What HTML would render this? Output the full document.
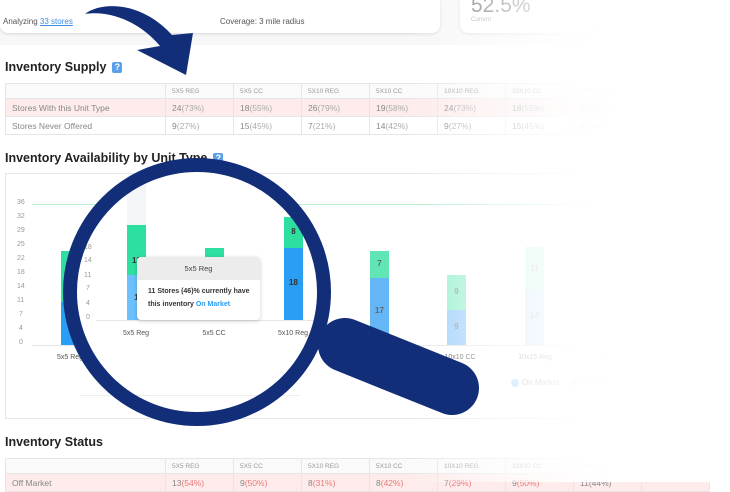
<!DOCTYPE html>
<html><head><meta charset="utf-8"><style>
*{margin:0;padding:0;box-sizing:border-box}
body{width:730px;height:482px;overflow:hidden;background:#fff;font-family:"Liberation Sans",sans-serif;position:relative;color:#333}
.abs{position:absolute}
.band{left:0;top:0;width:730px;height:45px;background:#f7f7f8}
.card{background:#fff;border-radius:0 0 8px 8px;box-shadow:0 1px 3px rgba(0,0,0,.12)}
h3{position:absolute;font-size:12.5px;font-weight:bold;color:#222;white-space:nowrap}
.q{display:inline-block;width:10px;height:11px;background:#5aa0e8;color:#fff;font-size:9px;text-align:center;line-height:11px;border-radius:2px;margin-left:6px;vertical-align:1px}
table{position:absolute;border-collapse:collapse;font-size:8.5px;color:#888}
td{border:1px solid #e6e6e6;padding:0 6px;height:18px;white-space:nowrap}
tr.h td{height:15px;font-size:6.5px;color:#999;background:#fafafa}
tr.p td{background:#fdeceb}
td.f{width:160px}
td.c{width:68px}
.r{color:#e87a7a}
.t{font-size:7px;color:#999;position:absolute}
.lab{font-size:7px;color:#555;position:absolute;transform:translateX(-50%);white-space:nowrap}
.bar{position:absolute;width:19px}
.n{position:absolute;width:19px;text-align:center;font-size:8px;font-weight:bold;color:#333}
.fade{left:0;top:0;width:730px;height:482px;background:linear-gradient(90deg,rgba(255,255,255,0) 0,rgba(255,255,255,0) 410px,rgba(255,255,255,.6) 500px,rgba(255,255,255,.95) 580px,#fff 620px)}
</style></head><body>
<div class="abs band"></div>
<div class="abs card" style="left:0;top:0;width:440px;height:33px"></div>
<div class="abs" style="left:3px;top:17px;font-size:8px;color:#555">Analyzing <span style="color:#3b8de0;text-decoration:underline">33 stores</span></div>
<div class="abs" style="left:220px;top:17px;font-size:8px;color:#555">Coverage: 3 mile radius</div>
<div class="abs card" style="left:460px;top:0;width:135px;height:33px;border-radius:0 0 8px 8px"></div>
<div class="abs" style="left:471px;top:-6px;font-size:21px;color:#666">52.5%</div>
<div class="abs" style="left:471px;top:17px;font-size:6px;color:#999">Current</div>

<h3 style="left:5px;top:60px">Inventory Supply<span class="q">?</span></h3>
<table style="left:5px;top:83px">
<tr class="h"><td class="f"></td><td class="c">5X5 REG</td><td class="c">5X5 CC</td><td class="c">5X10 REG</td><td class="c">5X10 CC</td><td class="c">10X10 REG</td><td class="c">10X10 CC</td><td class="c">10X15 REG</td><td class="c"></td></tr>
<tr class="p"><td>Stores With this Unit Type</td><td>24<span style="color:#aaa">(73%)</span></td><td>18<span style="color:#aaa">(55%)</span></td><td>26<span style="color:#aaa">(79%)</span></td><td>19<span style="color:#aaa">(58%)</span></td><td>24<span style="color:#aaa">(73%)</span></td><td>18<span style="color:#aaa">(55%)</span></td><td>25(76%)</td><td></td></tr>
<tr><td>Stores Never Offered</td><td>9<span style="color:#aaa">(27%)</span></td><td>15<span style="color:#aaa">(45%)</span></td><td>7<span style="color:#aaa">(21%)</span></td><td>14<span style="color:#aaa">(42%)</span></td><td>9<span style="color:#aaa">(27%)</span></td><td>15<span style="color:#aaa">(45%)</span></td><td>8(24%)</td><td></td></tr>
</table>

<h3 style="left:5px;top:151px">Inventory Availability by Unit Type<span class="q">?</span></h3>
<div class="abs" style="left:5px;top:173px;width:700px;height:246px;border:1px solid #e8e8e8"></div>
<div class="abs" style="left:32px;top:204px;width:640px;height:1px;background:#b8efcf"></div>
<div class="abs" style="left:32px;top:345px;width:640px;height:1px;background:#e6e6e6"></div>
<div class="t" style="left:17px;top:199px">36</div><div class="t" style="left:17px;top:213px">32</div><div class="t" style="left:17px;top:227px">29</div><div class="t" style="left:17px;top:241px">25</div><div class="t" style="left:17px;top:255px">22</div><div class="t" style="left:17px;top:269px">18</div><div class="t" style="left:17px;top:283px">14</div><div class="t" style="left:17px;top:297px">11</div><div class="t" style="left:19px;top:311px">7</div><div class="t" style="left:19px;top:325px">4</div><div class="t" style="left:19px;top:339px">0</div>
<div class="bar" style="left:61px;top:251px;height:51px;background:#2ee0a0"></div><div class="bar" style="left:61px;top:302px;height:43px;background:#2a9df4"></div>
<div class="bar" style="left:370px;top:251px;height:27px;background:#5fe6b4"></div><div class="bar" style="left:370px;top:278px;height:67px;background:#64b6f7"></div>
<div class="n" style="left:370px;top:259px;color:#666">7</div><div class="n" style="left:370px;top:306px;color:#666">17</div>
<div class="bar" style="left:447px;top:275px;height:35px;background:#9cf0d0"></div><div class="bar" style="left:447px;top:310px;height:35px;background:#9fd0fa"></div>
<div class="n" style="left:447px;top:287px;color:#999">9</div><div class="n" style="left:447px;top:322px;color:#999">9</div>
<div class="bar" style="left:525px;top:247px;height:43px;background:#c9f6e4"></div><div class="bar" style="left:525px;top:290px;height:55px;background:#cfe7fc"></div>
<div class="n" style="left:525px;top:264px;color:#bbb">11</div><div class="n" style="left:525px;top:311px;color:#bbb">14</div>
<div class="bar" style="left:602px;top:282px;height:31px;background:#eafbf4"></div><div class="bar" style="left:602px;top:313px;height:32px;background:#edf5fe"></div>
<div class="lab" style="left:70px;top:354px">5x5 Reg</div>
<div class="lab" style="left:460px;top:354px">10x10 CC</div>
<div class="lab" style="left:535px;top:354px;color:#888">10x15 Reg</div>
<div class="lab" style="left:612px;top:354px;color:#ccc">10x15 CC</div>
<div class="abs" style="left:511px;top:379px;width:8px;height:8px;border-radius:50%;background:#9fd0fa"></div>
<div class="abs" style="left:522px;top:378px;font-size:8px;color:#999">On Market</div>
<div class="abs" style="left:571px;top:379px;width:8px;height:8px;border-radius:50%;background:#c9f6e4"></div>
<div class="abs" style="left:582px;top:378px;font-size:8px;color:#ccc">Off Market</div>

<h3 style="left:5px;top:435px">Inventory Status</h3>
<table style="left:5px;top:458px">
<tr class="h"><td class="f"></td><td class="c">5X5 REG</td><td class="c">5X5 CC</td><td class="c">5X10 REG</td><td class="c">5X10 CC</td><td class="c">10X10 REG</td><td class="c">10X10 CC</td><td class="c">10X15 REG</td><td class="c"></td></tr>
<tr class="p"><td>Off Market</td><td>13<span class="r">(54%)</span></td><td>9<span class="r">(50%)</span></td><td>8<span class="r">(31%)</span></td><td>8<span class="r">(42%)</span></td><td>7<span class="r">(29%)</span></td><td>9<span class="r">(50%)</span></td><td>11(44%)</td><td></td></tr>
</table>

<div class="abs fade"></div>

<div class="abs" style="left:70px;top:165px;width:254px;height:254px;border-radius:50%;overflow:hidden;background:#fff"></div>
<div class="abs" style="left:96px;top:320px;width:230px;height:1px;background:#e6e6e6"></div>
<div class="abs" style="left:80px;top:395px;width:220px;height:1px;background:#eee"></div>
<div class="t" style="left:84px;top:244px">18</div><div class="t" style="left:84px;top:257px">14</div><div class="t" style="left:84px;top:272px">11</div><div class="t" style="left:86px;top:285px">7</div><div class="t" style="left:86px;top:300px">4</div><div class="t" style="left:86px;top:314px">0</div>
<div class="bar" style="left:127px;top:175px;height:50px;background:#f3f5f9"></div>
<div class="bar" style="left:127px;top:225px;height:50px;background:#2ee0a0"></div><div class="bar" style="left:127px;top:275px;height:45px;background:#6cc0fb"></div>
<div class="n" style="left:127px;top:256px">13</div><div class="n" style="left:127px;top:293px">1</div>
<div class="bar" style="left:205px;top:248px;height:72px;background:#2ee0a0"></div>
<div class="bar" style="left:284px;top:217px;height:31px;background:#2ee0a0"></div><div class="bar" style="left:284px;top:248px;height:72px;background:#2a9df4"></div>
<div class="n" style="left:284px;top:227px">8</div><div class="n" style="left:284px;top:278px">18</div>
<div class="lab" style="left:136px;top:330px">5x5 Reg</div><div class="lab" style="left:214px;top:330px">5x5 CC</div><div class="lab" style="left:293px;top:330px">5x10 Reg</div>
<div class="abs" style="left:137px;top:257px;width:123px;height:63px;background:#fff;border-radius:4px;box-shadow:0 1px 4px rgba(0,0,0,.2);overflow:hidden">
 <div style="height:23px;background:#ececec;font-size:7.5px;color:#444;text-align:center;line-height:23px">5x5 Reg</div>
 <div style="padding:6px 0 0 11px;font-size:7px;font-weight:bold;color:#333;line-height:12.5px">11 Stores (46)% currently have<br>this inventory <span style="color:#2a9df4">On Market</span></div>
</div>

<svg class="abs" style="left:0;top:0" width="730" height="482">
 <circle cx="197" cy="292" r="127" fill="none" stroke="#132e78" stroke-width="14"/>
 <line x1="345" y1="345" x2="452" y2="388" stroke="#132e78" stroke-width="54" stroke-linecap="round"/>
 <path d="M85,14 C100,2 140,0 172,35 L193,33 L186,75 L137,50 L160,46 C140,22 110,10 85,14 Z" fill="#132e78"/>
</svg>
</body></html>
